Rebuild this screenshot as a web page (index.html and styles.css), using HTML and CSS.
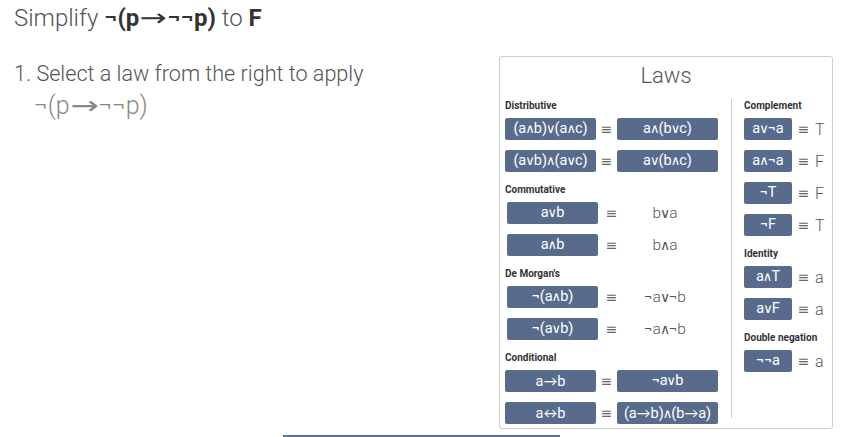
FILE: index.html
```html
<!DOCTYPE html>
<html>
<head>
<meta charset="utf-8">
<link rel="stylesheet" href="styles.css">
</head>
<body>
<h1 class="title">Simplify <b>¬(p<span class="arr">→</span>¬¬p)</b> to <b>F</b></h1>
<div class="main">
  <div class="work">
    <div class="step">1. Select a law from the right to apply</div>
    <div class="expr">¬(p<span class="arr">→</span>¬¬p)</div>
  </div>
  <div class="panel">
    <div class="panel-title">Laws</div>
    <div class="cols">
      <div class="left">
        <div class="sec">
          <div class="label">Distributive</div>
          <div class="grid g-two">
            <span class="btn">(a<i class="o">∧</i>b)<i class="o">∨</i>(a<i class="o">∧</i>c)</span><span class="eq">≡</span><span class="btn">a<i class="o">∧</i>(b<i class="o">∨</i>c)</span>
            <span class="btn">(a<i class="o">∨</i>b)<i class="o">∧</i>(a<i class="o">∨</i>c)</span><span class="eq">≡</span><span class="btn">a<i class="o">∨</i>(b<i class="o">∧</i>c)</span>
          </div>
        </div>
        <div class="sec">
          <div class="label">Commutative</div>
          <div class="grid g-one">
            <span class="btn">a<i class="o">∨</i>b</span><span class="eq">≡</span><span class="txt">b<i class="o">∨</i>a</span>
            <span class="btn">a<i class="o">∧</i>b</span><span class="eq">≡</span><span class="txt">b<i class="o">∧</i>a</span>
          </div>
        </div>
        <div class="sec">
          <div class="label">De Morgan's</div>
          <div class="grid g-one">
            <span class="btn">¬(a<i class="o">∧</i>b)</span><span class="eq">≡</span><span class="txt">¬a<i class="o">∨</i>¬b</span>
            <span class="btn">¬(a<i class="o">∨</i>b)</span><span class="eq">≡</span><span class="txt">¬a<i class="o">∧</i>¬b</span>
          </div>
        </div>
        <div class="sec">
          <div class="label">Conditional</div>
          <div class="grid g-two">
            <span class="btn">a<i class="sarr">→</i>b</span><span class="eq">≡</span><span class="btn">¬a<i class="o">∨</i>b</span>
            <span class="btn">a<i class="sarr">↔</i>b</span><span class="eq">≡</span><span class="btn">(a<i class="sarr">→</i>b)<i class="o">∧</i>(b<i class="sarr">→</i>a)</span>
          </div>
        </div>
      </div>
      <div class="divider"></div>
      <div class="right">
        <div class="sec">
          <div class="label">Complement</div>
          <div class="grid g-r">
            <span class="btn">a<i class="o">∨</i>¬a</span><span class="eq">≡</span><span class="val">T</span>
            <span class="btn">a<i class="o">∧</i>¬a</span><span class="eq">≡</span><span class="val">F</span>
            <span class="btn">¬T</span><span class="eq">≡</span><span class="val">F</span>
            <span class="btn">¬F</span><span class="eq">≡</span><span class="val">T</span>
          </div>
        </div>
        <div class="sec">
          <div class="label">Identity</div>
          <div class="grid g-r">
            <span class="btn">a<i class="o">∧</i>T</span><span class="eq">≡</span><span class="val">a</span>
            <span class="btn">a<i class="o">∨</i>F</span><span class="eq">≡</span><span class="val">a</span>
          </div>
        </div>
        <div class="sec">
          <div class="label">Double negation</div>
          <div class="grid g-r">
            <span class="btn">¬¬a</span><span class="eq">≡</span><span class="val">a</span>
          </div>
        </div>
      </div>
    </div>
  </div>
</div>
<div class="rule"></div>
</body>
</html>
```
FILE: styles.css
```css
html, body {
  margin: 0;
  padding: 0;
  background: #fff;
}
body {
  font-family: Roboto, "Liberation Sans", sans-serif;
  color: #555;
  padding: 4px 19px 0 14px;
}
.arr {
  font-family: "DejaVu Sans", sans-serif;
  font-weight: 400;
  display: inline-block;
  transform: scaleX(1.35);
  margin: 0 4px;
}
.sarr {
  font-style: normal;
  font-family: Lato, sans-serif;
  font-size: 0.95em;
}
.o {
  font-style: normal;
  font-family: "DejaVu Sans", sans-serif;
  font-size: 0.9em;
  margin: 0 -1px;
}
.title {
  margin: 0;
  font-size: 24px;
  font-weight: 300;
  color: #555;
  line-height: 28px;
  height: 28px;
}
.title b {
  font-weight: 700;
  color: #333;
}
.main {
  display: flex;
  justify-content: space-between;
  margin-top: 24px;
}
.work {
  padding-top: 5px;
}
.step {
  font-size: 21.6px;
  font-weight: 300;
  color: #555;
  line-height: 26px;
}
.expr {
  margin: 4px 0 0 20px;
  font-size: 25px;
  font-weight: 300;
  color: #888;
  line-height: 30px;
}
.panel {
  border: 1px solid #ccc;
  border-radius: 3px;
  padding: 6px 0 4px 5px;
  box-sizing: border-box;
  width: 334px;
}
.panel-title {
  text-align: center;
  font-size: 22px;
  font-weight: 300;
  color: #555;
  line-height: 26px;
  margin-bottom: 10px;
  padding-right: 5px;
}
.cols {
  display: flex;
}
.left {
  width: 213px;
  display: flex;
  flex-direction: column;
  gap: 11px;
}
.right {
  display: flex;
  flex-direction: column;
  gap: 11px;
}
.divider {
  width: 1px;
  background: #ccc;
  margin: 0 12px 6px 13px;
}
.label {
  font-size: 10px;
  font-weight: 700;
  color: #333;
  line-height: 14px;
  margin-bottom: 5px;
}
.grid {
  display: grid;
  row-gap: 10px;
  align-items: center;
}
.g-two {
  grid-template-columns: 91px 21px 101px;
}
.g-one {
  grid-template-columns: 91px 27px 80px;
  padding-left: 2px;
}
.g-r {
  grid-template-columns: 48px 23px 14px;
}
.btn {
  display: block;
  height: 22px;
  line-height: 22px;
  background: #586b8d;
  color: #fff;
  border-radius: 2px;
  text-align: center;
  font-size: 14.5px;
  white-space: nowrap;
}
.eq {
  text-align: center;
  font-family: "DejaVu Sans", sans-serif;
  font-size: 14px;
  color: #666;
}
.txt {
  text-align: center;
  font-size: 15.5px;
  font-weight: 300;
  color: #555;
}
.val {
  font-size: 16px;
  font-weight: 300;
  color: #555;
}
.rule {
  width: 277px;
  margin: 6px auto 0;
  border-top: 2px solid #5e6f8b;
  position: relative;
  left: -2px;
}
```
